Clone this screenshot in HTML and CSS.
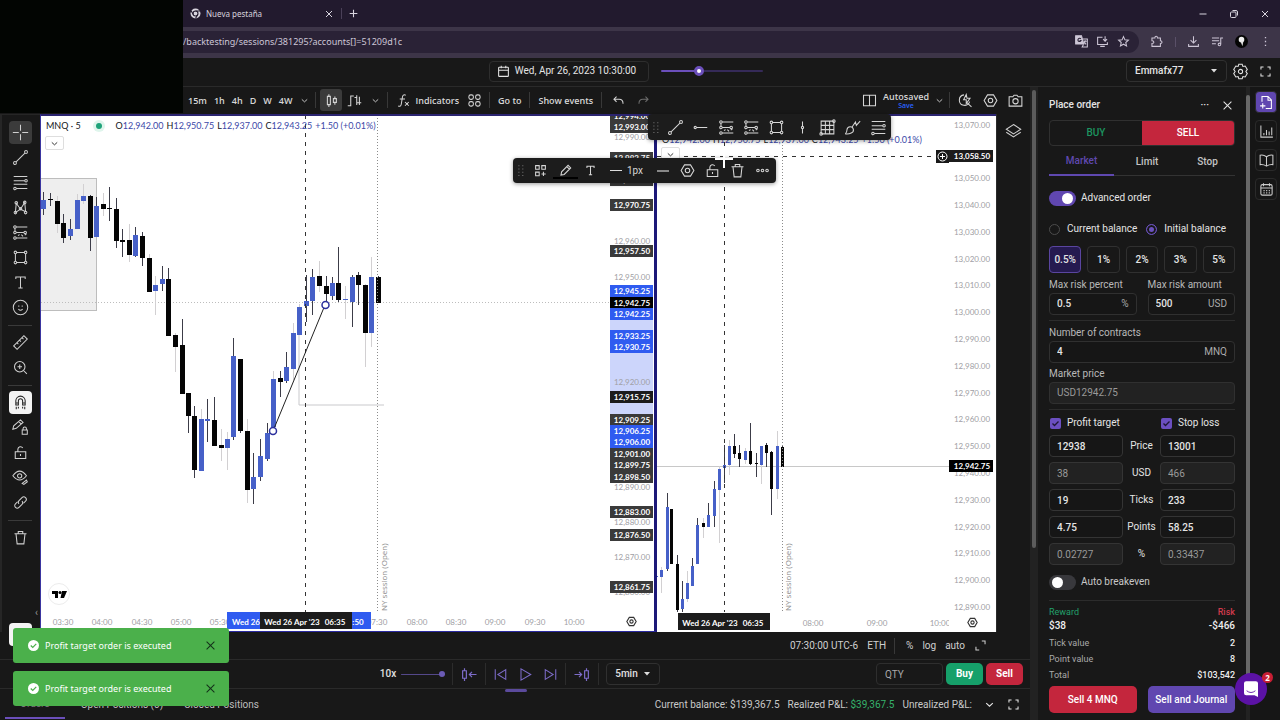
FILE: index.html
```html
<!DOCTYPE html>
<html lang="en">
<head>
<meta charset="utf-8">
<title>Backtesting session</title>
<link rel="stylesheet" href="styles.css">
</head>
<body>
<svg class="defs" aria-hidden="true">
  <symbol id="i-cross" viewBox="0 0 20 20"><path d="M10 1v7M10 12v7M1 10h7M12 10h7"/></symbol>
  <symbol id="i-trend" viewBox="0 0 20 20"><circle cx="3.500" cy="16.500" r="1.7"/><circle cx="16.500" cy="3.500" r="1.7"/><path d="M4.800 15.200 15.200 4.800"/></symbol>
  <symbol id="i-fib" viewBox="0 0 20 20"><path d="M2 3h16M2 8h13M2 12h16M5 17h13"/><circle cx="16.500" cy="8" r="1.5"/><circle cx="3.500" cy="17" r="1.5"/></symbol>
  <symbol id="i-xabcd" viewBox="0 0 20 20"><path d="M4 16 5 5l5 7 5-8 1 11-6-3-6 4"/><circle cx="4" cy="16" r="1.5"/><circle cx="5" cy="4.500" r="1.500"/><circle cx="15" cy="4" r="1.500"/><circle cx="16" cy="16" r="1.500"/><circle cx="10" cy="11.500" r="1.500"/></symbol>
  <symbol id="i-pos" viewBox="0 0 20 20"><path d="M5 3.500h13M5 10h9M5 16.500h13M3.500 5v3.500M7 13.500l2-1M11 12.500l2 2M15 13l2-1.500"/><circle cx="3.500" cy="3.500" r="1.500"/><circle cx="3.500" cy="10" r="1.500"/><circle cx="15.500" cy="10" r="1.500"/><circle cx="3.500" cy="16.500" r="1.500"/></symbol>
  <symbol id="i-rect" viewBox="0 0 20 20"><path d="M5.500 4h9M5.500 16h9M4 5.500v9M16 5.500v9"/><circle cx="4" cy="4" r="1.500"/><circle cx="16" cy="4" r="1.500"/><circle cx="4" cy="16" r="1.500"/><circle cx="16" cy="16" r="1.500"/></symbol>
  <symbol id="i-text" viewBox="0 0 20 20"><path d="M4.500 6V3.500h11V6M10 3.500v13M7.500 16.500h5"/></symbol>
  <symbol id="i-smile" viewBox="0 0 20 20"><circle cx="10" cy="10" r="8.500"/><path d="M8 7.500v1.500M12 7.500v1.500M7.500 12q2.500 2.500 5 0"/></symbol>
  <symbol id="i-ruler" viewBox="0 0 20 20"><path d="M2 14 14 2l4 4L6 18zM6 10.500l1.500 1.500M9 7.500 10.500 9M12 4.500 13.500 6"/></symbol>
  <symbol id="i-zoom" viewBox="0 0 20 20"><circle cx="9" cy="9" r="7"/><path d="M14 14l4.500 4.500M9 6v6M6 9h6"/></symbol>
  <symbol id="i-magnet" viewBox="0 0 20 20"><path d="M4.500 13V8a5.500 5.500 0 0 1 11 0v5h-3V8a2.500 2.500 0 0 0-5 0v5zM4.500 10.500h3M12.500 10.500h3M5 15v3M7.500 15v2M12.500 15v2M15 15v3"/></symbol>
  <symbol id="i-penlock" viewBox="0 0 20 20"><path d="M1 12l1-4 8-7 3 3-8 7zM8 3l3 3M12 13h6v5h-6zM13 13v-1.500a2 2 0 0 1 4 0V13"/></symbol>
  <symbol id="i-lock" viewBox="0 0 20 20"><path d="M3 9h14v9H3zM6.500 9V5.500a3.500 3.500 0 0 1 6.500-1.500M10 12v2.500"/></symbol>
  <symbol id="i-eye" viewBox="0 0 20 20"><path d="M1 8q8-11 16 0-8 10-16 0zM12 17l5-4 1 2-4 3z"/><circle cx="9" cy="8" r="2.500"/></symbol>
  <symbol id="i-link" viewBox="0 0 20 20"><path d="M8 12a3.500 3.500 0 0 1 0-4.500L12 3.500a3.300 3.300 0 0 1 4.700 4.700L14 11M12 8a3.500 3.500 0 0 1 0 4.500L8 16.500a3.300 3.300 0 0 1-4.700-4.700L6 9"/></symbol>
  <symbol id="i-trash" viewBox="0 0 20 20"><path d="M2 5h16M7 5V2h6v3M4 5l1.500 13.500h9L16 5"/></symbol>
  <symbol id="i-down" viewBox="0 0 20 20"><path d="M4 7.500 10 13l6-5.500"/></symbol>
  <symbol id="i-candles" viewBox="0 0 20 20"><path d="M4.500 4.500h4v11h-4zM6.500 1.500v3M6.500 15.500v3M12.500 7.500h4v5h-4zM14.500 4.500v3M14.500 12.500v3"/></symbol>
  <symbol id="i-bars" viewBox="0 0 20 20"><path d="M1 17h4V4h4M13 3v13M10 6h3M16.500 5v11M13 13h6"/></symbol>
  <symbol id="i-fx" viewBox="0 0 20 20"><path d="M13 3q-4-2-4.500 3L7 15q-.5 3.500-4 2.500M5 8h7M12 12l5 5M17 12l-5 5"/></symbol>
  <symbol id="i-four" viewBox="0 0 20 20"><rect x="2.500" y="2.500" width="6" height="6" rx="2.500"/><rect x="11.500" y="2.500" width="6" height="6" rx="2.500"/><rect x="2.500" y="11.500" width="6" height="6" rx="2.500"/><rect x="11.500" y="11.500" width="6" height="6" rx="2.500"/></symbol>
  <symbol id="i-undo" viewBox="0 0 20 20"><path d="M7 4 3 8l4 4M3 8h8q6 0 6 7"/></symbol>
  <symbol id="i-redo" viewBox="0 0 20 20"><path d="m13 4 4 4-4 4M17 8H9q-6 0-6 7"/></symbol>
  <symbol id="i-split" viewBox="0 0 20 20"><path d="M2 3h16v14H2zM10 3v14"/></symbol>
  <symbol id="i-flash" viewBox="0 0 20 20"><path d="M8 2.500a7 7 0 1 0 7.500 9M12.500 13.500 18 18.500M11 2 7.500 9H11v5l5-7h-4z"/></symbol>
  <symbol id="i-hex" viewBox="0 0 20 20"><path d="M6 2.500h8l4.500 7.500-4.500 7.500H6L1.500 10z"/><circle cx="10" cy="10" r="3"/></symbol>
  <symbol id="i-camera" viewBox="0 0 20 20"><path d="M1.500 5h5L8 3h4l1.500 2h5v12.500h-17z"/><circle cx="10" cy="11" r="3.500"/></symbol>
  <symbol id="i-layers" viewBox="0 0 20 20"><path d="M10 3 18.500 8.500 10 14 1.500 8.500zM1.500 12l8.500 5.500 8.500-5.500"/></symbol>
  <symbol id="i-cal" viewBox="0 0 20 20"><rect x="2.500" y="3.500" width="15" height="14" rx="1"/><path d="M2.500 8h15M6.500 1v4M13.500 1v4"/></symbol>
  <symbol id="i-gear" viewBox="0 0 20 20"><path d="M8 1.500h4l.8 2.500 2.700-.5 2.500 4L16.300 10l1.700 2.500-2.500 4-2.700-.5-.8 2.500H8L7.200 16l-2.700.5-2.500-4L3.700 10 2 7.500l2.500-4 2.700.5z"/><circle cx="10" cy="10" r="2.500"/></symbol>
  <symbol id="i-full" viewBox="0 0 20 20"><path d="M3 7V3h4M13 3h4v4M17 13v4h-4M7 17H3v-4"/></symbol>
  <symbol id="i-x" viewBox="0 0 20 20"><path d="M4 4l12 12M16 4 4 16"/></symbol>
  <symbol id="i-plus" viewBox="0 0 20 20"><path d="M10 3v14M3 10h14"/></symbol>
  <symbol id="i-hline" viewBox="0 0 20 20"><circle cx="3" cy="10" r="1.500"/><path d="M4.500 10H19"/></symbol>
  <symbol id="i-vline" viewBox="0 0 20 20"><circle cx="10" cy="10" r="1.500"/><path d="M10 2v6.500M10 11.500V18"/></symbol>
  <symbol id="i-grid" viewBox="0 0 20 20"><path d="M2.500 2.500h15v15h-15zM7.500 2.500v15M12.500 2.500v15M2.500 7.500h15M2.500 12.500h15"/><circle cx="17.500" cy="2.500" r="1.500"/><circle cx="2.500" cy="17.500" r="1.500"/></symbol>
  <symbol id="i-brush" viewBox="0 0 20 20"><path d="M1.500 17.500q2-2 2-5a3.800 3.800 0 1 1 5 4q-3 1.500-7 1M9.500 9.500l4-6 1 4 4.500-5"/></symbol>
  <symbol id="i-dots6" viewBox="0 0 20 20"><path d="M6 2v1.500M6 7v1.500M6 12v1.500M6 17v1.500M12 2v1.500M12 7v1.500M12 12v1.500M12 17v1.500"/></symbol>
  <symbol id="i-addgrid" viewBox="0 0 20 20"><path d="M2.500 2.500h5.500v5.500H2.500zM12 2.500h5.500v5.500H12zM2.500 12.500h5.500V18H2.500zM14.500 12v6.500M11.500 15.300H18"/></symbol>
  <symbol id="i-pencil" viewBox="0 0 20 20"><path d="M3 17l1-5L14 2l4 4L8 16zM12 4l4 4"/></symbol>
  <symbol id="i-more" viewBox="0 0 20 20"><circle cx="3" cy="10" r="2"/><circle cx="10" cy="10" r="2"/><circle cx="17" cy="10" r="2"/></symbol>
  <symbol id="i-back" viewBox="0 0 24 20"><path d="M3.500 5h5v10h-5zM6 1.500V5M6 15v3.500M22 10h-9M16 6.500 12.500 10l3.500 3.500"/></symbol>
  <symbol id="i-fwd" viewBox="0 0 24 20"><path d="M15.500 5h5v10h-5zM18 1.500V5M18 15v3.500M2 10h9M8 6.500l3.500 3.500L8 13.500"/></symbol>
  <symbol id="i-prev" viewBox="0 0 20 20"><path d="M3 3v14M17 3.500v13L6.500 10z"/></symbol>
  <symbol id="i-play" viewBox="0 0 20 20"><path d="M4 2.500v15L17 10z"/></symbol>
  <symbol id="i-next" viewBox="0 0 20 20"><path d="M17 3v14M3 3.500v13L13.500 10z"/></symbol>
  <symbol id="i-order" viewBox="0 0 20 20"><path d="M4 9V2h8l4.500 4.500V18H9M12 2v5h4.500M5 11v7M1.500 14.500h7"/></symbol>
  <symbol id="i-chart" viewBox="0 0 20 20"><path d="M2.500 2v15.500h16M6.500 12v3M10 8v7M13.500 10v5M17 4.500V15"/></symbol>
  <symbol id="i-book" viewBox="0 0 20 20"><path d="M10 5Q6 2 1.500 3v12.500Q6 15 10 17.500 14 15 18.500 15.500V3Q14 2 10 5zM10 5v12.500"/></symbol>
  <symbol id="i-calendar" viewBox="0 0 20 20"><rect x="2.500" y="3.500" width="15" height="14" rx="2"/><path d="M2.500 8h15M6 1.500v4M14 1.500v4M6 11.500h1.500M9.500 11.500H11M13 11.500h1.500M6 14.500h1.500M9.500 14.500H11M13 14.500h1.500"/></symbol>
  <symbol id="i-maxi" viewBox="0 0 20 20"><path d="M12 3h5v5M3 12v5h5"/></symbol>
  <symbol id="i-star" viewBox="0 0 20 20"><path d="m10 2.500 2.200 5 5.300.5-4 3.600 1.200 5.400-4.700-2.800L5.300 17l1.200-5.400-4-3.600 5.300-.5z"/></symbol>
  <symbol id="i-translate" viewBox="0 0 20 20"><path d="M1 1h9l3.500 13H1z" fill="currentColor"/><path d="M12 6h7v12.500h-8l2-4M13.500 9.500H18M15.700 8v1.500q-.5 3-2.500 4M14 10.500l3 4"/><path d="M9 6a2.500 2.500 0 1 0 .3 2.500H7" stroke="#2a2236"/></symbol>
  <symbol id="i-install" viewBox="0 0 20 20"><path d="M10 3.500H2.500v11h15V11M6.500 17.500h7M14 2v7M11 6.500l3 3 3-3"/></symbol>
  <symbol id="i-puzzle" viewBox="0 0 20 20"><path d="M3 4.500h4.500q0-2.500 2-2.500t2 2.500H16V9q2.500 0 2.500 2T16 13v4.500H3V13q3 0 3-2T3 9z"/></symbol>
  <symbol id="i-dl" viewBox="0 0 20 20"><path d="M10 2v10M5.500 8l4.500 4.500L14.500 8M2.500 14v3.500h15V14"/></symbol>
  <symbol id="i-queue" viewBox="0 0 20 20"><path d="M1.500 4.500h11M1.500 9h11M1.500 13.500h6M15 14V4.500h3.500"/><circle cx="13" cy="14.500" r="2"/></symbol>
  <symbol id="i-restore" viewBox="0 0 20 20"><rect x="3" y="6" width="11" height="11" rx="2"/><path d="M7 3h7q3 0 3 3v7"/></symbol>
</svg>

<header class="browser">
  <div class="tabstrip">
    <svg class="favicon" viewBox="0 0 20 20"><circle cx="10" cy="10" r="9" fill="#d8d4de"/><circle cx="10" cy="10" r="4.500" fill="#d8d4de" stroke="#221a2e" stroke-width="2"/><path d="M10 5.500h8.500M6 12 2 5M14 12l-4 7" stroke="#221a2e" stroke-width="2"/></svg>
    <span class="tab-title">Nueva pestaña</span>
    <button class="ib" aria-label="Close tab"><svg class="ic s10"><use href="#i-x"/></svg></button>
    <span class="sep"></span>
    <button class="ib" aria-label="New tab"><svg class="ic s11"><use href="#i-plus"/></svg></button>
    <div class="win">
      <button class="ib" aria-label="Minimize"><svg class="ic s10" viewBox="0 0 20 20"><path d="M3 10h14"/></svg></button>
      <button class="ib" aria-label="Restore"><svg class="ic s10"><use href="#i-restore"/></svg></button>
      <button class="ib" aria-label="Close"><svg class="ic s10"><use href="#i-x"/></svg></button>
    </div>
  </div>
  <div class="addressbar">
    <div class="omnibox">
      <span class="url">/backtesting/sessions/381295?accounts[]=51209d1c</span>
      <svg class="ic s13"><use href="#i-translate"/></svg>
      <svg class="ic s13"><use href="#i-install"/></svg>
      <svg class="ic s13"><use href="#i-star"/></svg>
    </div>
    <div class="ext">
      <svg class="ic s13"><use href="#i-puzzle"/></svg>
      <span class="sep"></span>
      <svg class="ic s13"><use href="#i-dl"/></svg>
      <svg class="ic s13"><use href="#i-queue"/></svg>
      <svg class="avatar" viewBox="0 0 14 14"><circle cx="7" cy="7" r="7" fill="#050505"/><circle cx="7" cy="5" r="3" fill="#eee"/><path d="M6 7h3l-1 5z" fill="#ddd"/></svg>
      <svg class="ic s13" viewBox="0 0 20 20"><path d="M10 3v2M10 9v2M10 15v2" stroke-width="2"/></svg>
    </div>
  </div>
</header>

<div class="appbar">
  <div></div>
  <div class="appbar-mid">
    <button class="datebtn"><svg class="ic s13"><use href="#i-cal"/></svg>Wed, Apr 26, 2023 10:30:00</button>
    <input class="range top" type="range" min="0" max="100" value="36" aria-label="Session position">
  </div>
  <div class="appbar-right">
    <select class="account" aria-label="Account"><option>Emmafx77</option></select>
    <button class="ib" aria-label="Settings"><svg class="ic s17"><use href="#i-gear"/></svg></button>
    <button class="ib" aria-label="Full screen"><svg class="ic s13"><use href="#i-full"/></svg></button>
  </div>
</div>

<main class="main">
  <section class="workspace">
    <div class="toolbar">
      <div class="times"><button>15m</button><button>1h</button><button>4h</button><button>D</button><button>W</button><button>4W</button></div>
      <button class="ib g10" aria-label="More intervals"><svg class="ic s9"><use href="#i-down"/></svg></button>
      <span class="sep"></span>
      <button class="ib active" aria-label="Candles"><svg class="ic s15"><use href="#i-candles"/></svg></button>
      <button class="ib w24" aria-label="Bars"><svg class="ic s15"><use href="#i-bars"/></svg></button>
      <button class="ib w14" aria-label="More styles"><svg class="ic s9"><use href="#i-down"/></svg></button>
      <span class="sep"></span>
      <button class="tb"><svg class="ic s15"><use href="#i-fx"/></svg>Indicators</button>
      <button class="ib w24" aria-label="Templates"><svg class="ic s15"><use href="#i-four"/></svg></button>
      <span class="sep"></span>
      <button class="tb">Go to</button>
      <span class="sep"></span>
      <button class="tb">Show events</button>
      <span class="sep"></span>
      <button class="ib w24" aria-label="Undo"><svg class="ic s13"><use href="#i-undo"/></svg></button>
      <button class="ib w24 dim" aria-label="Redo"><svg class="ic s13"><use href="#i-redo"/></svg></button>
      <div class="toolbar-right">
        <button class="ib" aria-label="Layout"><svg class="ic s15"><use href="#i-split"/></svg></button>
        <button class="save"><span>Autosaved</span><small>Save</small></button>
        <button class="ib" aria-label="Layouts"><svg class="ic s9"><use href="#i-down"/></svg></button>
        <span class="sep"></span>
        <button class="ib w24" aria-label="Quick search"><svg class="ic s15"><use href="#i-flash"/></svg></button>
        <button class="ib w24" aria-label="Chart settings"><svg class="ic s15"><use href="#i-hex"/></svg></button>
        <button class="ib w24" aria-label="Snapshot"><svg class="ic s15"><use href="#i-camera"/></svg></button>
      </div>
    </div>

    <div class="middle">
      <nav class="drawbar" aria-label="Drawing tools">
        <button class="ib active" aria-label="Cross"><svg class="ic s17"><use href="#i-cross"/></svg></button>
        <button class="ib" aria-label="Trend line"><svg class="ic s17"><use href="#i-trend"/></svg></button>
        <button class="ib" aria-label="Fib"><svg class="ic s17"><use href="#i-fib"/></svg></button>
        <button class="ib" aria-label="Patterns"><svg class="ic s17"><use href="#i-xabcd"/></svg></button>
        <button class="ib" aria-label="Forecast"><svg class="ic s17"><use href="#i-pos"/></svg></button>
        <button class="ib" aria-label="Shapes"><svg class="ic s17"><use href="#i-rect"/></svg></button>
        <button class="ib" aria-label="Text"><svg class="ic s17"><use href="#i-text"/></svg></button>
        <button class="ib" aria-label="Icons"><svg class="ic s17"><use href="#i-smile"/></svg></button>
        <hr>
        <button class="ib" aria-label="Measure"><svg class="ic s17"><use href="#i-ruler"/></svg></button>
        <button class="ib" aria-label="Zoom"><svg class="ic s15"><use href="#i-zoom"/></svg></button>
        <hr>
        <button class="ib inverse" aria-label="Magnet"><svg class="ic s17"><use href="#i-magnet"/></svg></button>
        <button class="ib" aria-label="Stay in drawing mode"><svg class="ic s17"><use href="#i-penlock"/></svg></button>
        <button class="ib" aria-label="Lock"><svg class="ic s15"><use href="#i-lock"/></svg></button>
        <button class="ib" aria-label="Hide"><svg class="ic s17"><use href="#i-eye"/></svg></button>
        <button class="ib" aria-label="Sync"><svg class="ic s15"><use href="#i-link"/></svg></button>
        <hr>
        <button class="ib" aria-label="Remove"><svg class="ic s15"><use href="#i-trash"/></svg></button>
        <button class="ib inverse last" aria-label="Favorites"></button>
        <span class="collapse">‹</span>
      </nav>

      <div class="charts">
        <div class="chart first">
          <svg class="plot" id="plot1"><g class="origin1">
            <rect x="40.500" y="178.500" width="56" height="132" fill="#eeeeee" stroke="#bdbdbd"/>
            <path d="M41 302.500H612" class="dots"/>
            <path d="M299 335V405M299 405H384" stroke="#c9c9cc"/>
            <g class="candles"></g>
            <path d="M305.500 115V612" class="cross"/>
            <path d="M377.500 115V612" class="vdots"/>
            <path d="M273 431 325 305" stroke="#222" />
            <circle cx="273" cy="431" r="3.500" class="handle"/><circle cx="325.500" cy="305" r="3.500" class="handle"/>
            <text class="session" transform="translate(387 611) rotate(-90)">NY session (Open)</text>
            <circle cx="59" cy="594" r="10.500" fill="#fff" stroke="#ececec"/>
            <path d="M52 591h6v7h-3v-4h-3zM62 591h5l-3 7h-3.500z" fill="#000"/><circle cx="60" cy="592.500" r="1.500" fill="#000"/>
          </g></svg>
          <svg class="prices" id="prices1"></svg>
          <svg class="timeaxis" id="time1"></svg>
          <div class="corner"><svg class="ic s11"><use href="#i-hex"/></svg></div>
          <div class="legend"><span class="sym">MNQ · 5</span><i></i><span>O<b>12,942.00</b></span><span>H<b>12,950.75</b></span><span>L<b>12,937.00</b></span><span>C<b>12,943.25</b></span><b>+1.50 (+0.01%)</b></div>
          <button class="fold" aria-label="Collapse legend"><svg class="ic s9"><use href="#i-down"/></svg></button>
        </div>
        <div class="chart second">
          <svg class="plot" id="plot2"><g class="origin2">
            <path d="M657 466.500H952" stroke="#c8c8c8"/>
            <g class="candles"></g>
            <path d="M657 156.500H935M724.500 115V612" class="cross"/>
            <path d="M782.500 115V612" class="vdots"/>
            <text class="session" transform="translate(791 611) rotate(-90)">NY session (Open)</text>
            <rect x="936" y="150" width="13" height="13" fill="#181818"/><circle cx="942.500" cy="156.500" r="4.500" fill="none" stroke="#fff"/><path d="M940 156.500h5M942.500 154v5" stroke="#fff"/>
          </g></svg>
          <svg class="prices" id="prices2"></svg>
          <svg class="timeaxis" id="time2"></svg>
          <div class="corner"><svg class="ic s11"><use href="#i-hex"/></svg></div>
          <div class="legend"><span>O<b>12,942.00</b></span><span>H<b>12,950.75</b></span><span>L<b>12,937.00</b></span><span>C<b>12,943.25</b></span><b>+1.50 (+0.01%)</b></div>
          <button class="fold" aria-label="Collapse legend"><svg class="ic s9"><use href="#i-down"/></svg></button>
        </div>

        <div class="floatbar favorites">
          <svg class="ic s13 grip"><use href="#i-dots6"/></svg>
          <button class="ib" aria-label="Trend line"><svg class="ic s17"><use href="#i-trend"/></svg></button>
          <button class="ib" aria-label="Horizontal ray"><svg class="ic s15"><use href="#i-hline"/></svg></button>
          <button class="ib" aria-label="Long position"><svg class="ic s17"><use href="#i-pos"/></svg></button>
          <button class="ib" aria-label="Short position"><svg class="ic s17"><use href="#i-pos"/></svg></button>
          <button class="ib" aria-label="Rectangle"><svg class="ic s17"><use href="#i-rect"/></svg></button>
          <button class="ib" aria-label="Vertical line"><svg class="ic s15"><use href="#i-vline"/></svg></button>
          <button class="ib" aria-label="Grid"><svg class="ic s17"><use href="#i-grid"/></svg></button>
          <button class="ib" aria-label="Brush"><svg class="ic s17"><use href="#i-brush"/></svg></button>
          <button class="ib" aria-label="Fib retracement"><svg class="ic s17"><use href="#i-fib"/></svg></button>
        </div>
        <div class="floatbar drawing">
          <svg class="ic s13 grip"><use href="#i-dots6"/></svg>
          <button class="ib" aria-label="Templates"><svg class="ic s13"><use href="#i-addgrid"/></svg></button>
          <button class="ib ink" aria-label="Line color"><svg class="ic s13"><use href="#i-pencil"/></svg></button>
          <button class="ib" aria-label="Text"><svg class="ic s13"><use href="#i-text"/></svg></button>
          <button class="ib width"><span class="dash"></span>1px</button>
          <button class="ib" aria-label="Line style"><span class="dash gray"></span></button>
          <button class="ib" aria-label="Settings"><svg class="ic s15"><use href="#i-hex"/></svg></button>
          <button class="ib" aria-label="Lock"><svg class="ic s15"><use href="#i-lock"/></svg></button>
          <button class="ib" aria-label="Remove"><svg class="ic s15"><use href="#i-trash"/></svg></button>
          <button class="ib" aria-label="More"><svg class="ic s13"><use href="#i-more"/></svg></button>
        </div>
        <svg class="cursor" viewBox="0 0 18 18"><path d="M0 9h18M9 0v18"/></svg>
      </div>

      <aside class="strip"><button class="ib" aria-label="Object tree"><svg class="ic s17"><use href="#i-layers"/></svg></button></aside>
    </div>

    <div class="statusbar">
      <span>07:30:00 UTC-6</span><span>ETH</span><span class="sep"></span><span>%</span><span>log</span><span>auto</span>
      <button class="ib" aria-label="Maximize"><svg class="ic s13"><use href="#i-maxi"/></svg></button>
    </div>

    <div class="playbar">
      <div></div>
      <div class="player">
        <label class="speed">10x <input class="range mini" type="range" min="0" max="10" value="10"></label>
        <span class="sep"></span>
        <button class="ib" aria-label="Candle back"><svg class="ic w18"><use href="#i-back"/></svg></button>
        <span class="sep"></span>
        <div class="transport">
          <button class="ib" aria-label="Previous"><svg class="ic s15"><use href="#i-prev"/></svg></button>
          <button class="ib" aria-label="Play"><svg class="ic s15"><use href="#i-play"/></svg></button>
          <button class="ib" aria-label="Next"><svg class="ic s15"><use href="#i-next"/></svg></button>
        </div>
        <span class="sep"></span>
        <button class="ib" aria-label="Candle forward"><svg class="ic w18"><use href="#i-fwd"/></svg></button>
        <span class="sep"></span>
        <select class="step" aria-label="Step"><option>5min</option></select>
      </div>
      <div class="quick">
        <input class="qty" type="text" placeholder="QTY" aria-label="Quantity">
        <button class="qbuy">Buy</button><button class="qsell">Sell</button>
      </div>
      <span class="drag"></span>
    </div>

    <div class="bottom">
      <button class="btab on">Orders</button><button class="btab">Open Positions (0)</button><button class="btab">Closed Positions</button>
      <div class="balances">
        <span>Current balance: $139,367.5</span><span>Realized P&amp;L: <em>$39,367.5</em></span><span>Unrealized P&amp;L:</span>
        <button class="ib" aria-label="Expand"><svg class="ic s11"><use href="#i-down"/></svg></button>
        <button class="ib" aria-label="Full screen"><svg class="ic s13"><use href="#i-full"/></svg></button>
      </div>
    </div>
  </section>

  <div class="scroll one"><span></span></div>

  <form class="order">
    <div class="ohead"><h2>Place order</h2><button type="button" class="ib" aria-label="More">···</button><button type="button" class="ib" aria-label="Close"><svg class="ic s13"><use href="#i-x"/></svg></button></div>
    <div class="side"><button type="button" class="buy">BUY</button><button type="button" class="sell">SELL</button></div>
    <div class="otabs"><button type="button" class="on">Market</button><button type="button">Limit</button><button type="button">Stop</button></div>
    <label class="adv"><input type="checkbox" class="switch" checked>Advanced order</label>
    <div class="radios"><label><input type="radio" name="bal">Current balance</label><label><input type="radio" name="bal" checked>Initial balance</label></div>
    <div class="pcts"><button type="button" class="on">0.5%</button><button type="button">1%</button><button type="button">2%</button><button type="button">3%</button><button type="button">5%</button></div>
    <div class="two">
      <div class="fld"><label for="rp">Max risk percent</label><div class="box"><input id="rp" value="0.5"><span>%</span></div></div>
      <div class="fld"><label for="ra">Max risk amount</label><div class="box"><input id="ra" value="500"><span>USD</span></div></div>
    </div>
    <hr>
    <div class="fld"><label for="nc">Number of contracts</label><div class="box"><input id="nc" value="4"><span>MNQ</span></div></div>
    <div class="fld gap"><label for="mp">Market price</label><div class="box off"><input id="mp" value="USD12942.75" disabled></div></div>
    <hr>
    <div class="targets">
      <label class="chk"><input type="checkbox" checked>Profit target</label><span></span><label class="chk"><input type="checkbox" checked>Stop loss</label>
      <input aria-label="Profit price" value="12938"><span>Price</span><input aria-label="Stop price" value="13001">
      <input aria-label="Profit USD" value="38" disabled><span>USD</span><input aria-label="Stop USD" value="466" disabled>
      <input aria-label="Profit ticks" value="19"><span>Ticks</span><input aria-label="Stop ticks" value="233">
      <input aria-label="Profit points" value="4.75"><span>Points</span><input aria-label="Stop points" value="58.25">
      <input aria-label="Profit percent" value="0.02727" disabled><span>%</span><input aria-label="Stop percent" value="0.33437" disabled>
    </div>
    <label class="adv auto"><input type="checkbox" class="switch">Auto breakeven</label>
    <hr>
    <dl class="sum">
      <dt class="green">Reward</dt><dd class="red">Risk</dd>
      <dt class="amt">$38</dt><dd class="amt">-$466</dd>
      <dt>Tick value</dt><dd>2</dd>
      <dt>Point value</dt><dd>8</dd>
      <dt>Total</dt><dd>$103,542</dd>
    </dl>
    <div class="two submit"><button type="button" class="sell">Sell 4 MNQ</button><button type="button" class="journal">Sell and Journal</button></div>
  </form>

  <div class="scroll two-bar"><span></span></div>

  <nav class="rail" aria-label="Panels">
    <button class="ib on" aria-label="Order"><svg class="ic s15"><use href="#i-order"/></svg></button>
    <button class="ib" aria-label="Statistics"><svg class="ic s15"><use href="#i-chart"/></svg></button>
    <button class="ib" aria-label="Journal"><svg class="ic s15"><use href="#i-book"/></svg></button>
    <button class="ib" aria-label="Calendar"><svg class="ic s15"><use href="#i-calendar"/></svg></button>
  </nav>
</main>

<div class="cover"></div>
<div class="toasts">
  <div class="toast" role="status"><svg class="tick" viewBox="0 0 12 12"><circle cx="6" cy="6" r="6" fill="#fff"/><path d="m3 6 2.200 2.200L9 4.200" stroke="#4bb04b" stroke-width="1.300" fill="none"/></svg><span>Profit target order is executed</span><button class="ib" aria-label="Dismiss"><svg class="ic s13"><use href="#i-x"/></svg></button></div>
  <div class="toast" role="status"><svg class="tick" viewBox="0 0 12 12"><circle cx="6" cy="6" r="6" fill="#fff"/><path d="m3 6 2.200 2.200L9 4.200" stroke="#4bb04b" stroke-width="1.300" fill="none"/></svg><span>Profit target order is executed</span><button class="ib" aria-label="Dismiss"><svg class="ic s13"><use href="#i-x"/></svg></button></div>
</div>
<button class="chat" aria-label="Chat"><svg viewBox="0 0 16 18"><path d="M2.500 0h11Q16 0 16 2.500V18l-4-2H2.500Q0 16 0 13.500v-11Q0 0 2.500 0z" fill="#fff"/><path d="M3 11q5 4 10 0" stroke="#5b12a5" fill="none"/></svg><span>2</span></button>
<script src="app.js"></script>
</body>
</html>
```
FILE: styles.css
```css
* { box-sizing: border-box; }
body { margin: 0; height: 100vh; min-height: 720px; display: flex; flex-direction: column; overflow: hidden; background: #181818; color: #e4e4e4; font: 10px/14px Roboto, sans-serif; position: relative; }
button, input, select { font: inherit; color: inherit; margin: 0; }
button { background: none; border: 0; padding: 0; cursor: pointer; white-space: nowrap; }
hr { border: 0; border-top: 1px solid #333; margin: 0; width: 100%; }
.defs { position: absolute; width: 0; height: 0; }
.ic { fill: none; stroke: currentColor; stroke-width: 1.2; flex: none; display: block; }
.s9 { width: 9px; height: 9px; stroke-width: 2; }
.s10 { width: 10px; height: 10px; stroke-width: 2; }
.s11 { width: 11px; height: 11px; stroke-width: 2; }
.s13 { width: 13px; height: 13px; stroke-width: 1.6; }
.s15 { width: 15px; height: 15px; stroke-width: 1.4; }
.s17 { width: 17px; height: 17px; }
.w18 { width: 18px; height: 15px; stroke-width: 1.6; }
.ib { display: flex; align-items: center; justify-content: center; }
.sep { width: 1px; height: 16px; background: #383838; flex: none; }

.tabstrip { height: 27px; background: #221a2e; padding: 0 10px 0 190px; display: flex; align-items: center; color: #d8d4de; font: 8px "Noto Sans", sans-serif; }
.favicon { width: 11px; height: 11px; margin-right: 5px; fill: none; }
.tab-title { width: 118px; }
.tabstrip .sep { margin: 0 6px 0 7px; height: 11px; background: #4a4058; }
.win { margin-left: auto; display: flex; gap: 21px; }
.addressbar { height: 31px; background: #3d3548; display: flex; align-items: center; padding: 0 8px 2px 0; }
.omnibox { flex: 1; height: 22px; background: #2a2236; border-radius: 0 11px 11px 0; padding: 0 9px 0 183px; display: flex; align-items: center; gap: 8px; color: #cdc6d6; font: 9px "Noto Sans", sans-serif; }
.url { flex: 1; }
.ext { display: flex; align-items: center; gap: 11px; padding-left: 11px; color: #cdc6d6; }
.ext .ic:first-child { margin-right: 1px; }
.ext .sep { background: #5a5068; height: 10px; margin: 0; }
.avatar { width: 13px; height: 13px; }

.appbar { height: 29px; border-bottom: 1px solid #2a2a2a; display: grid; grid-template-columns: 1fr auto 1fr; align-items: center; padding: 0 8px 2px 0; }
.appbar-mid { display: flex; align-items: center; gap: 12px; padding-right: 20px; }
.datebtn { height: 21px; border: 1px solid #2e2e2e; border-radius: 4px; padding: 0 12px 0 7px; display: flex; align-items: center; gap: 5px; }
.appbar-right { display: flex; justify-content: flex-end; align-items: center; gap: 5px; }
.appbar-right .ib + .ib { margin-left: 5px; }
select { appearance: none; border: 1px solid #303030; border-radius: 4px; height: 22px; padding: 0 8px; font-weight: 500; background: url("data:image/svg+xml,%3Csvg xmlns='http://www.w3.org/2000/svg' width='6' height='4'%3E%3Cpath d='M0 0h6L3 3.500z' fill='%23ddd'/%3E%3C/svg%3E") no-repeat right 9px center; }
.account { width: 101px; }
.range { appearance: none; background: none; height: 12px; padding: 0; }
.range::-webkit-slider-runnable-track { height: 2px; border-radius: 1px; background: linear-gradient(90deg, #6b4fbb 37%, #352a58 37%); }
.range::-webkit-slider-thumb { appearance: none; width: 10px; height: 10px; margin-top: -4px; border-radius: 50%; background: #fff; border: 3px solid #6b4fbb; }
.range.top { width: 102px; }
.range.mini { width: 44px; }
.range.mini::-webkit-slider-runnable-track { height: 1px; background: #54488a; }
.range.mini::-webkit-slider-thumb { width: 6px; height: 6px; margin-top: -3px; border: 0; background: #6b5bb5; }

.main { flex: 1; min-height: 0; display: flex; }
.workspace { flex: 1; min-width: 0; display: flex; flex-direction: column; }
.toolbar { height: 27px; display: flex; align-items: center; padding: 0 2px 1px 188px; color: #d6d6d6; font: 600 9px "Open Sans", sans-serif; }
.times { display: flex; gap: 7px; margin-right: 6px; }
.toolbar > .sep { margin: 0 4px; }
.w24 { width: 25px; }
.w14 { width: 16px; }
.g10 { margin: 0 2px; }
.dim { color: #6d6d6d; }
.tb { display: flex; align-items: center; gap: 4px; padding: 0 4px; }
.tb + .w24 { width: 22px; }
.active { width: 22px; height: 22px; background: #3b3b3b; border-radius: 3px; }
.toolbar-right { margin-left: auto; display: flex; align-items: center; }
.save { display: flex; flex-direction: column; align-items: center; line-height: 10px; padding: 0 6px; }
.save small { font-size: 7px; line-height: 7px; color: #2962ff; }
.toolbar-right .sep { margin: 0 3px 0 5px; }

.middle { flex: 1; min-height: 0; display: flex; }
.drawbar { width: 40px; padding: 6px 8px 0 6px; display: flex; flex-direction: column; align-items: center; position: relative; border-top: 1px solid #262626; border-left: 2px solid #262626; color: #d0d0d0; flex: none; }
.drawbar .ib { width: 23px; height: 23px; margin-bottom: 2px; flex: none; border-radius: 4px; }
.drawbar hr { margin: 4px 0 5px; border-color: #3a3a3a; }
.inverse { background: #f4f4f4; color: #222; }
.drawbar .last { margin: auto 0 -14px; }
.collapse { position: absolute; right: 2px; bottom: 12px; color: #999; }
.charts { flex: 1; min-width: 0; display: grid; grid-template-columns: 1.82fr 1fr; position: relative; color: #131722; }
.chart { background: #fff; display: grid; grid-template-rows: minmax(0, 1fr) 19px; position: relative; min-width: 0; border-top: 2px solid #2b2470; }
.first { grid-template-columns: minmax(0, 1fr) 43px; border-right: 3px solid #1c1878; padding-right: 1px; border-bottom: 1px solid #2b2aa0; border-left: 1px solid #3a35a0; }
.second { grid-template-columns: minmax(0, 1fr) 47px; }
.plot, .prices, .timeaxis { width: 100%; height: 100%; display: block; overflow: hidden; }
.plot { fill: none; }
.origin1 { transform: translate(-41px, -116px); }
.origin2 { transform: translate(-657px, -116px); }
.dots { stroke: #bdbdbd; stroke-dasharray: 1 2; }
.vdots { stroke: #8c8c8c; stroke-dasharray: 1 2; }
.cross { stroke: #333; stroke-dasharray: 4 5; }
.handle { fill: #fff; stroke: #2a2f9c; stroke-width: 1.500; }
.session { font: 8px "Open Sans", sans-serif; fill: #8c8c8c; }
.axis { font: 8px Lato, sans-serif; fill: #a0a0a4; text-anchor: middle; }
.axis.tag { font-weight: 700; fill: #fff; }
.corner { display: flex; align-items: center; justify-content: center; color: #333; }
.legend { position: absolute; left: 5px; top: 3px; display: flex; gap: 3px; align-items: center; font: 9px/14px Lato, sans-serif; white-space: nowrap; }
.legend b { font-weight: 400; color: #3b48a8; }
.legend i { width: 6px; height: 6px; border-radius: 50%; background: #1fa37a; box-shadow: 0 0 0 3px #dff5ec; margin: 0 11px 0 12px; }
.second .legend { left: 5px; top: 17px; }
.fold { position: absolute; left: 4px; top: 20px; width: 19px; height: 14px; border: 1px solid #dedede; border-radius: 2px; background: #fff; display: flex; align-items: center; justify-content: center; color: #222; }
.second .fold { top: 31px; }
.floatbar { position: absolute; background: #1c1c1c; border-radius: 4px; display: flex; align-items: center; color: #d6d6d6; box-shadow: 0 1px 4px #0006; }
.floatbar .grip { color: #777; }
.favorites { left: 608px; top: 0; width: 243px; height: 26px; padding: 0 0 0 2px; }
.favorites .ib { flex: 1; height: 24px; }
.drawing { left: 473px; top: 44px; height: 25px; padding: 0 1px 0 2px; }
.drawing .ib { width: 25px; height: 23px; }
.drawing .width { width: 47px; gap: 5px; }
.ink { box-shadow: inset 0 -3px #1c1c1c, inset 0 -5px #000; }
.dash { width: 12px; height: 1px; background: #ddd; }
.dash.gray { background: #888; height: 2px; }
.cursor { position: absolute; left: 675px; top: 36px; width: 18px; height: 18px; stroke: #fff; stroke-width: 2; }
.strip { width: 34px; border-left: 1px solid #2a2a2a; padding-top: 8px; display: flex; justify-content: center; align-items: flex-start; color: #d0d0d0; flex: none; }

.statusbar { height: 28px; display: flex; align-items: center; justify-content: flex-end; gap: 9px; padding-right: 43px; border-bottom: 1px solid #2a2a2a; color: #d0d0d0; }
.statusbar .sep { margin: 0 2px 0 -1px; }
.playbar { height: 29px; display: grid; grid-template-columns: 1fr auto 1fr; align-items: center; border-bottom: 1px solid #2a2a2a; padding-left: 10px; position: relative; }
.player { display: flex; align-items: center; gap: 7px; color: #7d6cc9; }
.player .sep { height: 22px; background: #2c2c2c; }
.transport { display: flex; gap: 10px; }
.speed { display: flex; align-items: center; gap: 5px; color: #e0e0e0; font-weight: 500; }
.step { color: #e0e0e0; width: 54px; }
.quick { display: flex; justify-content: flex-end; gap: 3px; padding-right: 7px; }
.qty { width: 67px; height: 22px; border: 1px solid #2e2e2e; border-radius: 4px; background: none; padding: 0 8px; }
.qty::placeholder { color: #a8a8a8; }
.qbuy, .qsell { width: 37px; height: 22px; border-radius: 5px; font-weight: 700; color: #fff; background: #16a06a; }
.qsell { background: #c4263d; }
.drag { position: absolute; left: 50%; bottom: -4px; width: 22px; height: 3px; margin-left: -10px; border-radius: 2px; background: #5b4a9c; }
.bottom { height: 31px; display: flex; align-items: center; gap: 21px; padding: 0 10px 0 5px; color: #bdbdbd; }
.btab { height: 29px; }
.on.btab { padding: 0 15px; border-bottom: 2px solid #6b4fbb; margin-right: -5px; color: #777; }
.balances { margin-left: auto; display: flex; align-items: center; gap: 8px; color: #c9c9c9; }
.balances em { font-style: normal; color: #35b26b; }
.balances .ib { margin-left: 4px; color: #e8e8e8; }

.scroll { width: 8px; background: #222; padding: 3px 2px 0; flex: none; }
.scroll span { display: block; height: 458px; border-radius: 2px; background: #5c5c5c; }
.two-bar { width: 4px; padding: 8px 0 20px; }
.two-bar span { height: 100%; background: #686868; }
.order { width: 208px; flex: none; padding: 8px 11px 0; font-weight: 500; }
.ohead { display: flex; align-items: center; gap: 12px; height: 20px; margin-right: 1px; }
.ohead h2 { font-size: 10px; font-weight: 500; margin: 0; flex: 1; }
.side { display: grid; grid-template-columns: 1fr 1fr; height: 26px; border: 1px solid #303030; border-radius: 4px; margin-top: 5px; overflow: hidden; }
.buy { color: #1c9460; }
.sell { background: #c4263d; color: #fff; }
.otabs { display: grid; grid-template-columns: 65px 66px 1fr; height: 30px; border-bottom: 1px solid #333; }
.otabs button { margin-bottom: -1px; padding-top: 1px; color: #c4c4c4; }
.otabs .on { border-bottom: 2px solid #5f48b0; color: #5f48b0; }
.adv { display: flex; align-items: center; gap: 5px; margin-top: 14px; height: 16px; font-weight: 400; }
.switch { appearance: none; width: 27px; height: 15px; border-radius: 8px; background: #38383c; position: relative; }
.switch::after { content: ""; position: absolute; left: 3px; top: 2px; width: 11px; height: 11px; border-radius: 50%; background: #fff; }
.switch:checked { background: #6047b0; }
.switch:checked::after { left: 13px; }
.radios { display: flex; gap: 9px; margin-top: 15px; height: 16px; font-weight: 400; }
.radios label { display: flex; align-items: center; gap: 7px; white-space: nowrap; }
.radios input { appearance: none; width: 11px; height: 11px; border-radius: 50%; border: 1px solid #4c4c4c; }
.radios input:checked { border-color: #6b52bd; background: #6b52bd; box-shadow: inset 0 0 0 2px #181818; }
.pcts { display: grid; grid-template-columns: repeat(5, 1fr); gap: 6px; margin-top: 9px; }
.pcts button { height: 27px; border: 1px solid #303030; border-radius: 4px; }
.pcts .on { background: #251a50; border-color: #5a45a0; }
.two { display: grid; grid-template-columns: 1fr 1fr; gap: 11px; margin-top: 4px; }
.fld > label { display: block; height: 16px; line-height: 16px; font-weight: 400; color: #b8b8b8; }
.box { display: flex; align-items: center; height: 22px; border: 1px solid #303030; border-radius: 4px; padding: 0 7px; background: #161616; }
.box input { flex: 1; width: 0; min-width: 0; border: 0; background: none; padding: 0; }
.box span { color: #aaa; font-weight: 400; }
.box.off, .targets input:disabled { background: #222; color: #999; font-weight: 400; }
.order hr { margin: 5px 0 4px; border-color: #2c2c2c; }
.gap { margin-top: 3px; }
.targets { display: grid; grid-template-columns: 74px 37px 75px; row-gap: 5px; text-align: center; margin-top: 5px; }
.targets > input { height: 22px; width: 100%; border: 1px solid #343434; border-radius: 4px; background: #161616; padding: 0 7px; }
.targets > span { line-height: 22px; font-weight: 400; }
.targets .chk { display: flex; align-items: center; gap: 6px; height: 22px; margin: -3px 0 -4px; white-space: nowrap; font-weight: 400; }
.chk input { appearance: none; width: 11px; height: 11px; margin-left: 1px; border-radius: 2px; background: #6b4fc0 url("data:image/svg+xml,%3Csvg xmlns='http://www.w3.org/2000/svg' width='11' height='11'%3E%3Cpath d='M2.500 5.500l2 2 4-4' fill='none' stroke='%231d1633' stroke-width='1.300'/%3E%3C/svg%3E") no-repeat center; }
.adv.auto { margin-top: 9px; margin-bottom: 10px; color: #c8c8c8; }
.sum { display: grid; grid-template-columns: 1fr auto; margin: 0; font-size: 9px; line-height: 16px; font-weight: 400; color: #aaa; }
.sum dd { margin: 0; text-align: right; color: #eee; font-weight: 500; }
.sum .amt { font-size: 10px; color: #eee; font-weight: 500; line-height: 14px; margin-bottom: 2px; }
.sum .green { color: #22a06b; line-height: 14px; }
.sum .red { color: #d03a4c; line-height: 14px; }
.submit { margin-top: 3px; }
.submit button { height: 27px; border-radius: 5px; }
.journal { background: #6047b0; color: #fff; }
.rail { width: 30px; padding: 4px 3px 0 5px; display: flex; flex-direction: column; gap: 7px; background: #161616; flex: none; }
.rail .ib { width: 22px; height: 22px; border: 1px solid #2a2a2a; border-radius: 4px; color: #ccc; }
.rail .on { background: #6047b0; color: #fff; }

.cover { position: absolute; left: 0; top: 0; width: 183px; height: 113px; background: #020502; }
.toasts { position: absolute; left: 13px; bottom: 14px; display: flex; flex-direction: column; gap: 8px; }
.toast { width: 216px; height: 35px; border-radius: 3px; background: #4bb04b; color: #fff; display: flex; align-items: center; padding: 0 12px 0 15px; font: 9px "Noto Sans", sans-serif; }
.toast span { flex: 1; white-space: nowrap; }
.toast .ib { color: #14301a; }
.tick { width: 11px; height: 11px; margin-right: 6px; }
.chat { position: absolute; right: 13px; bottom: 15px; width: 32px; height: 32px; border-radius: 50%; background: #5b12a5; }
.chat svg { width: 14px; height: 16px; display: block; margin: auto; }
.chat span { position: absolute; right: -6px; top: -1px; width: 11px; height: 11px; border-radius: 50%; background: #c81e34; color: #fff; font: 700 8px/11px "Open Sans", sans-serif; }
```
FILE: app.js
```js
// Candle rows: x, high, body top, body bottom, low, kind (b = up, k = down), f = faint wick
const left = [
  [43,192,200,209,215,'b'],[50,193,199,200,206,'k'],[57,196,201,224,233,'k','f'],[63,214,223,238,243,'k'],
  [70,219,229,236,240,'b'],[77,194,200,229,229,'b','f'],[83,184,196,201,204,'b','f'],[90,195,196,238,251,'k'],
  [96,197,206,237,237,'b'],[103,193,204,209,216,'k','f'],[109,187,208,209,221,'k'],[116,198,209,241,248,'k'],
  [122,229,240,242,257,'k'],[129,224,240,255,262,'k','f'],[135,227,235,256,257,'b'],[142,232,236,258,266,'k'],
  [149,254,258,292,292,'k','f'],[155,276,285,291,315,'b','f'],[162,266,279,284,291,'b'],[168,268,279,336,336,'k'],
  [175,333,335,347,372,'k','f'],[182,319,345,394,394,'k'],[188,393,393,416,433,'k'],[194,406,416,470,478,'k'],
  [201,409,419,471,471,'b','f'],[207,399,419,421,442,'b'],[214,397,420,446,446,'k'],[221,429,445,448,461,'k','f'],
  [227,432,439,448,470,'b','f'],[233,338,356,437,440,'b'],[240,359,359,431,433,'k'],[247,419,431,490,503,'k','f'],
  [253,453,477,489,504,'b'],[260,439,456,477,481,'b'],[267,423,433,459,461,'b'],[273,371,379,427,427,'b','f'],
  [280,371,378,382,397,'k'],[286,352,367,381,383,'b'],[293,323,333,369,380,'b','f'],[299,304,307,335,335,'b','f'],
  [306,275,301,306,322,'b'],[312,269,277,301,315,'b'],[319,261,276,286,292,'k','f'],[326,276,286,294,302,'k'],
  [332,277,283,296,300,'b'],[338,247,283,300,302,'k'],[345,286,299,300,319,'b','f'],[352,275,277,302,327,'b'],
  [358,272,275,285,305,'k'],[365,284,285,333,367,'k','f'],[371,257,277,333,347,'b','f'],[378,276,277,303,303,'k']
];
const right = [
  [656,574,576,577,578,'b'],[661,567,570,577,593,'b','f'],[667,493,507,569,571,'b'],[671,509,509,564,564,'k'],
  [677,555,564,610,612,'k'],[682,581,599,609,612,'b'],[687,571,583,599,602,'b','f'],[692,558,566,586,586,'b'],
  [697,518,525,564,564,'b'],[703,518,523,527,538,'k','f'],[708,503,515,527,527,'b'],[714,481,489,516,527,'b'],
  [719,466,469,490,543,'b','f'],[724,445,465,468,483,'b'],[729,440,446,465,475,'b','f'],[734,434,446,454,458,'k'],
  [739,445,453,459,467,'k'],[745,448,451,460,464,'b','f'],[750,423,451,464,465,'k'],[756,453,463,464,477,'k'],
  [761,446,446,465,484,'b','f'],[766,443,445,453,467,'k'],[771,451,452,489,515,'k'],[777,431,446,489,499,'b','f'],
  [782,445,447,467,467,'k']
];

const candles = (id, rows, w) => {
  document.querySelector(`#${id} .candles`).innerHTML = rows.map(([x, h, t, b, l, kind, faint]) => {
    const body = kind === 'k' ? '#050505' : '#4660c8';
    return `<rect x="${x}" y="${h}" width="1" height="${l - h}" fill="${faint ? '#d2d0d2' : '#3c3c48'}"/>` +
      `<rect x="${x - (w - 1) / 2}" y="${t}" width="${w}" height="${Math.max(b - t, 1)}" fill="${body}"/>`;
  }).join('');
};
candles('plot1', left, 5);
candles('plot2', right, 3);

// Price rows: y, text, tag colour (none = plain tick)
const D = '#3a3a3a', K = '#1c1c1c', B = '#2f5bf0';
const prices1 = [
  [137,'12,990.00'],[241,'12,960.00'],[277,'12,950.00'],[382,'12,920.00'],[487,'12,890.00'],[522,'12,880.00'],[557,'12,870.00'],[592,'12,860.00'],
  [116,'12,994.00',D],[127,'12,993.00',D],[158,'12,982.75',D],[180,'12,977.00',D],[205,'12,970.75',D],[251,'12,957.50',D],
  [291,'12,945.25',B],[303,'12,942.75','#000'],[314,'12,942.25',B],[336,'12,933.25',B],[347,'12,930.75',B],
  [397,'12,915.75',K],[420,'12,909.25',D],[431,'12,906.25',B],[442,'12,906.00',B],[454,'12,901.00',D],[465,'12,899.75',D],
  [477,'12,898.50',D],[512,'12,883.00',D],[535,'12,876.50',D],[587,'12,861.75',D]
];
const prices2 = [13070,13050,13040,13030,13020,13010,13000,12990,12980,12970,12960,12950,12940,12930,12920,12910,12900,12890]
  .map(p => [Math.round(124.5 + (13070 - p) * 2.68), p.toLocaleString('en-US') + '.00'])
  .concat([[156,'13,058.50',K],[466,'12,942.75','#000']]);

const prices = (id, rows, cx, w, extra) => {
  document.getElementById(id).innerHTML = (extra || '') + rows.map(([y, text, fill]) =>
    (fill ? `<rect x="0" y="${y - 122}" width="${w}" height="12" fill="${fill}"/>` : '') +
    `<text class="axis${fill ? ' tag' : ''}" x="${cx}" y="${y - 113}">${text}</text>`).join('');
};
prices('prices1', prices1, 22, 43, '<rect x="0" y="170" width="43" height="156" fill="#ccd5fb"/>');
prices('prices2', prices2, 23, 44);

const times = (id, rows, extra) => {
  document.getElementById(id).innerHTML =
    rows.map(([x, text]) => `<text class="axis" x="${x}" y="13">${text}</text>`).join('') + extra;
};
times('time1', [[22,'03:30'],[61,'04:00'],[101,'04:30'],[140,'05:00'],[179,'05:30'],[336,'07:30'],[376,'08:00'],[415,'08:30'],[454,'09:00'],[494,'09:30'],[533,'10:00']],
  `<rect x="186" y="0" width="144" height="17" fill="${B}"/><text class="axis tag" x="205" y="13">Wed 26</text><text class="axis tag" x="317" y="13">:50</text>` +
  `<rect x="219" y="0" width="92" height="17" fill="${K}"/><text class="axis tag" x="251" y="13">Wed 26 Apr '23</text><text class="axis tag" x="294" y="13">06:35</text>`);
times('time2', [[156,'08:00'],[220,'09:00'],[283,'10:00']],
  `<rect x="21" y="0" width="92" height="17" fill="${K}"/><text class="axis tag" x="53" y="13">Wed 26 Apr '23</text><text class="axis tag" x="96" y="13">06:35</text>`);
```
